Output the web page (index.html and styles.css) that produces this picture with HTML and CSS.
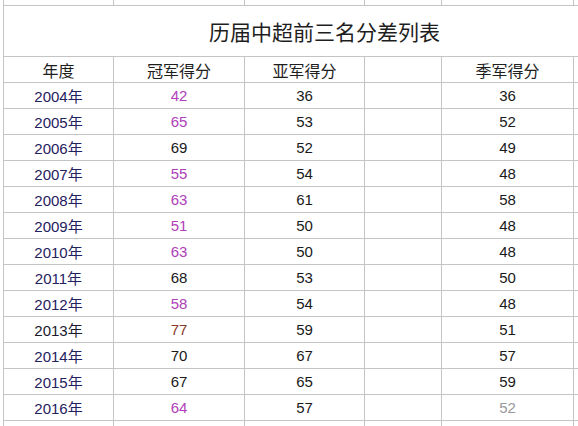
FILE: index.html
```html
<!DOCTYPE html>
<html lang="zh-CN">
<head>
<meta charset="utf-8">
<title>历届中超前三名分差列表</title>
<link rel="stylesheet" href="styles.css">
</head>
<body>
<div class="sheet">
  <div class="c top"></div><div class="c top"></div><div class="c top"></div><div class="c top"></div><div class="c top"></div><div class="c e"></div>
  <div class="c title">历届中超前三名分差列表</div>
  <div class="c hd">年度</div><div class="c hd">冠军得分</div><div class="c hd">亚军得分</div><div class="c"></div><div class="c hd">季军得分</div><div class="c e"></div>

  <div class="c yr">2004年</div><div class="c n pk">42</div><div class="c n">36</div><div class="c"></div><div class="c n">36</div><div class="c e"></div>
  <div class="c yr">2005年</div><div class="c n pk">65</div><div class="c n">53</div><div class="c"></div><div class="c n">52</div><div class="c e"></div>
  <div class="c yr">2006年</div><div class="c n">69</div><div class="c n">52</div><div class="c"></div><div class="c n">49</div><div class="c e"></div>
  <div class="c yr">2007年</div><div class="c n pk">55</div><div class="c n">54</div><div class="c"></div><div class="c n">48</div><div class="c e"></div>
  <div class="c yr">2008年</div><div class="c n pk">63</div><div class="c n">61</div><div class="c"></div><div class="c n">58</div><div class="c e"></div>
  <div class="c yr">2009年</div><div class="c n pk">51</div><div class="c n">50</div><div class="c"></div><div class="c n">48</div><div class="c e"></div>
  <div class="c yr">2010年</div><div class="c n pk">63</div><div class="c n">50</div><div class="c"></div><div class="c n">48</div><div class="c e"></div>
  <div class="c yr">2011年</div><div class="c n">68</div><div class="c n">53</div><div class="c"></div><div class="c n">50</div><div class="c e"></div>
  <div class="c yr">2012年</div><div class="c n pk">58</div><div class="c n">54</div><div class="c"></div><div class="c n">48</div><div class="c e"></div>
  <div class="c yr dk">2013年</div><div class="c n br">77</div><div class="c n">59</div><div class="c"></div><div class="c n">51</div><div class="c e"></div>
  <div class="c yr">2014年</div><div class="c n">70</div><div class="c n">67</div><div class="c"></div><div class="c n">57</div><div class="c e"></div>
  <div class="c yr">2015年</div><div class="c n">67</div><div class="c n">65</div><div class="c"></div><div class="c n">59</div><div class="c e"></div>
  <div class="c yr">2016年</div><div class="c n pk">64</div><div class="c n">57</div><div class="c"></div><div class="c n faded">52</div><div class="c e"></div>
  <div class="c"></div><div class="c"></div><div class="c"></div><div class="c"></div><div class="c"></div><div class="c e"></div>
</div>
</body>
</html>
```

FILE: styles.css
```css
html, body {
  margin: 0;
  padding: 0;
  background: #ffffff;
  overflow: hidden;
}
body {
  padding-left: 3px;
  font-family: "Liberation Sans", "Noto Sans CJK SC", sans-serif;
  color: #1a1a1a;
}
.sheet {
  display: grid;
  width: max-content;
  grid-template-columns: 110px 131px 120px 77px 132px 4px;
  grid-template-rows: 6px 51px repeat(14, 26px) 26px;
  border-left: 1px solid #c4c4c4;
}
.c {
  box-sizing: border-box;
  border-right: 1px solid #c4c4c4;
  border-bottom: 1px solid #c4c4c4;
  display: flex;
  align-items: center;
  justify-content: center;
  white-space: nowrap;
}
.c.e { border-right: none; }
.title {
  grid-column: 1 / -1;
  border-right: none;
  justify-content: flex-start;
  padding-left: 205px;
  font-family: "Noto Sans CJK SC", sans-serif;
  font-size: 21px;
  color: #1e1e1e;
}
.hd {
  font-family: "Noto Sans CJK SC", sans-serif;
  font-size: 16px;
  color: #1e1e1e;
}
.n {
  font-size: 15px;
}
.yr {
  font-size: 15px;
  color: #1f2160;
}
.yr.dk { color: #1a1a2e; }
.pk { color: #b040b8; }
.br { color: #8a3a2c; }
.faded { color: #9a9a9a; }
```
